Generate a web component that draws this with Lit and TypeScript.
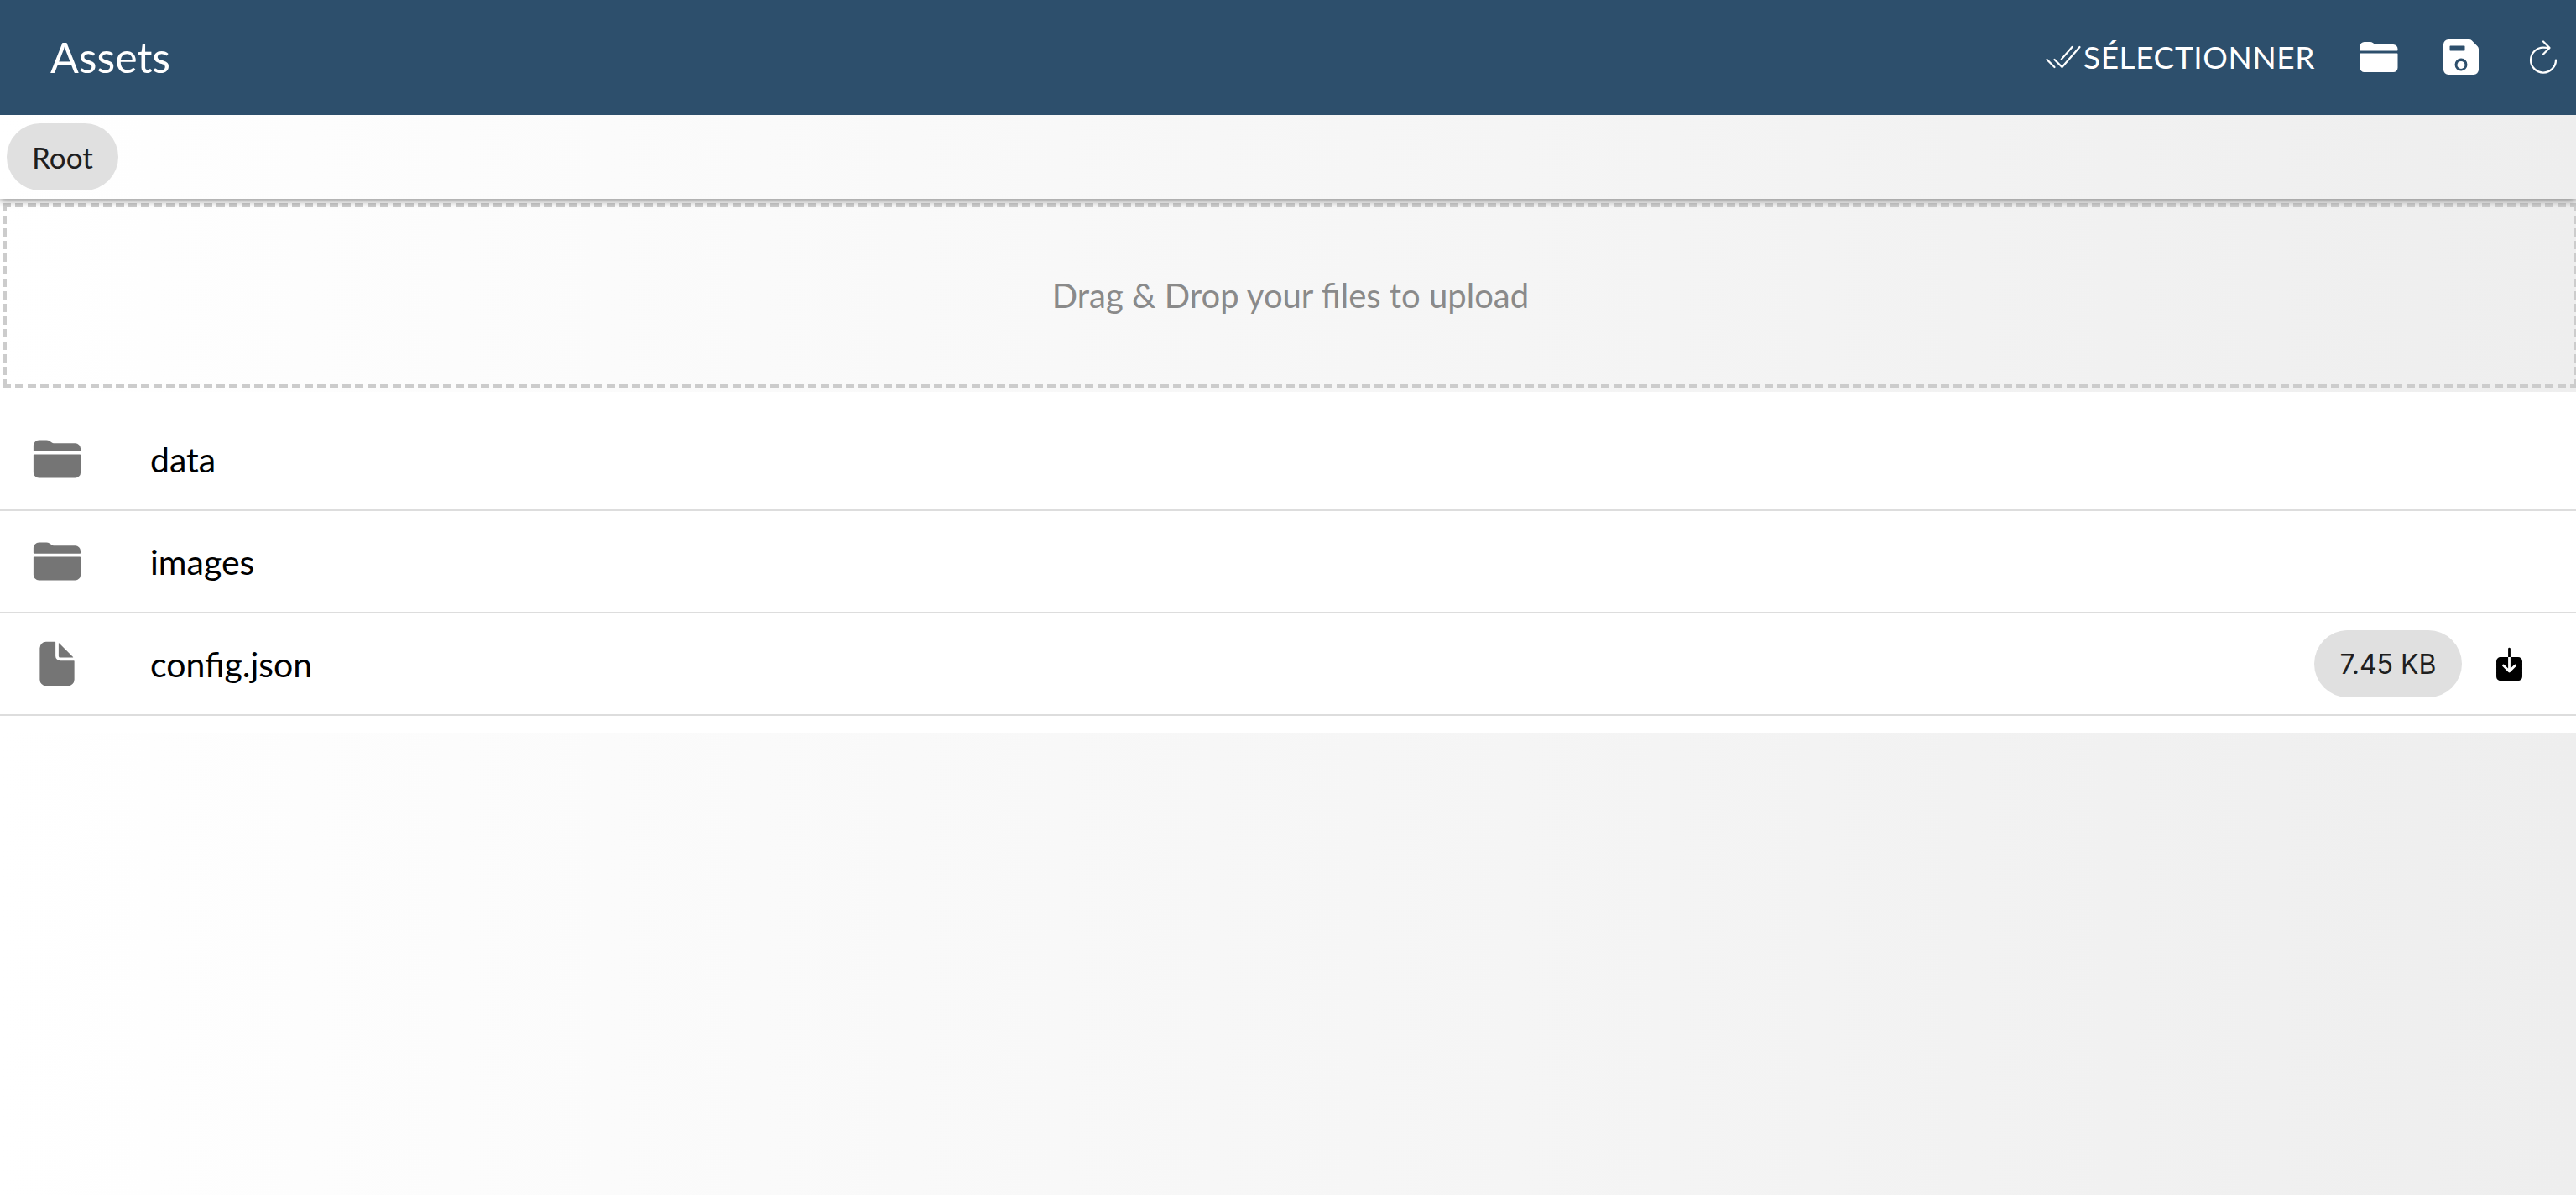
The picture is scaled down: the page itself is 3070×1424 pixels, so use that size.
import { LitElement, html, css, svg } from "lit";
import { customElement } from "lit/decorators.js";

const folder = svg`<path d="M496 152a56 56 0 00-56-56H220.11a23.89 23.89 0 01-13.31-4L179 73.41A55.77 55.77 0 00147.89 64H72a56 56 0 00-56 56v48a8 8 0 008 8h464a8 8 0 008-8zM16 392a56 56 0 0056 56h368a56 56 0 0056-56V216a8 8 0 00-8-8H24a8 8 0 00-8 8z"/>`;
const documentIcon = svg`<path d="M428 224H288a48 48 0 01-48-48V36a4 4 0 00-4-4h-92a64 64 0 00-64 64v320a64 64 0 0064 64h224a64 64 0 0064-64V228a4 4 0 00-4-4z"/><path d="M419.22 188.59L275.41 44.78a2 2 0 00-3.41 1.41V176a16 16 0 0016 16h129.81a2 2 0 001.41-3.41z"/>`;
const save = svg`<path d="M465.94 119.76l-73.7-73.7A47.68 47.68 0 00358.3 32H96a64 64 0 00-64 64v320a64 64 0 0064 64h320a64 64 0 0064-64V153.7a47.68 47.68 0 00-14.06-33.94zM120 112h176a8 8 0 018 8v48a8 8 0 01-8 8H120a8 8 0 01-8-8v-48a8 8 0 018-8zm139.75 319.91a80 80 0 1176.16-76.16 80.06 80.06 0 01-76.16 76.16z"/><circle cx="256" cy="356" r="48"/>`;
const refresh = svg`<path d="M320 146s24.36-12-64-12a160 160 0 10160 160" fill="none" stroke="currentColor" stroke-linecap="round" stroke-miterlimit="10" stroke-width="24"/><path fill="none" stroke="currentColor" stroke-linecap="round" stroke-linejoin="round" stroke-width="24" d="M256 58l80 80-80 80"/>`;
const done = svg`<path fill="none" stroke="currentColor" stroke-linecap="round" stroke-linejoin="round" stroke-width="24" d="M464 128L240 384l-96-96M144 384l-96-96M368 128L232 284"/>`;
const download = svg`<path d="M376 160H272v153.37l52.69-52.68a16 16 0 0122.62 22.62l-80 80a16 16 0 01-22.62 0l-80-80a16 16 0 0122.62-22.62L240 313.37V160H136a56.06 56.06 0 00-56 56v208a56.06 56.06 0 0056 56h240a56.06 56.06 0 0056-56V216a56.06 56.06 0 00-56-56zM272 48a16 16 0 00-32 0v112h32z"/>`;

const icon = (body: unknown, cls: string) =>
  html`<svg class=${cls} viewBox="0 0 512 512" fill="currentColor">${body}</svg>`;

interface Entry { name: string; kind: "folder" | "file"; size?: string }
const entries: Entry[] = [
  { name: "data", kind: "folder" },
  { name: "images", kind: "folder" },
  { name: "config.json", kind: "file", size: "7.45 KB" },
];

@customElement("app-root")
export class AppRoot extends LitElement {
  static styles = css`
    :host {
      display: block;
      width: 100%;
      height: 1424px;
      overflow: hidden;
      font-family: "Lato", "Liberation Sans", sans-serif;
      background: linear-gradient(90deg, #fff 0%, #eee 100%);
    }
    .header {
      height: 137px;
      background: #2d4f6c;
      color: #fff;
      display: flex;
      align-items: center;
      padding: 0 15px 2px 60px;
      box-sizing: border-box;
    }
    .title { font-size: 50px; font-weight: 400; flex: 1; }
    .select {
      display: flex;
      align-items: center;
      font-size: 37px;
      letter-spacing: 0.6px;
      margin-right: 52px;
    }
    .hicons { display: flex; gap: 50px; align-items: center; }
    .hi { width: 48px; height: 48px; display: block; }
    .crumbs {
      position: relative;
      z-index: 1;
      height: 100px;
      display: flex;
      align-items: center;
      box-shadow: 0 2px 8px rgba(0, 0, 0, 0.45);
      clip-path: inset(0 0 -30px 0);
    }
    .chip {
      display: inline-flex;
      align-items: center;
      height: 80px;
      border-radius: 40px;
      background: #e0e0e0;
      color: #1f1f1f;
      font-size: 35px;
      box-sizing: border-box;
      padding: 0 30px;
    }
    .crumbs .chip { margin-left: 8px; }
    .zone-wrap { padding: 5px 0 5px 3px; width: 3070px; box-sizing: border-box; }
    .zone {
      width: 3070px;
      height: 220px;
      box-sizing: border-box;
      border: 5px dashed #ccc;
      display: flex;
      align-items: center;
      justify-content: center;
      color: #8a8a8a;
      font-size: 40px;
    }
    .list { background: #fff; padding: 20px 0 20px; }
    .row {
      height: 122px;
      box-sizing: border-box;
      border-bottom: 2px solid #ddd;
      display: flex;
      align-items: center;
      color: #000;
      font-size: 41px;
    }
    .lead { width: 60px; height: 60px; margin: 0 81px 0 38px; color: #757575; display: block; flex: none; }
    .name { flex: 1; }
    .row .chip {
      margin-right: 34px;
      font-family: "Inter", "Liberation Sans", sans-serif;
      font-size: 32px;
      width: 176px;
      padding: 0;
      justify-content: center;
    }
    .dl { width: 45px; height: 45px; margin-right: 57px; display: block; flex: none; }
  `;

  render() {
    return html`
      <div class="header">
        <div class="title">Assets</div>
        <div class="select">${icon(done, "hi")}<span>SÉLECTIONNER</span></div>
        <div class="hicons">
          ${icon(folder, "hi")}${icon(save, "hi")}${icon(refresh, "hi")}
        </div>
      </div>
      <div class="crumbs"><span class="chip">Root</span></div>
      <div class="zone-wrap"><div class="zone">Drag &amp; Drop your files to upload</div></div>
      <div class="list">
        ${entries.map(
          (e) => html`<div class="row">
            ${icon(e.kind === "folder" ? folder : documentIcon, "lead")}
            <span class="name">${e.name}</span>
            ${e.size
              ? html`<span class="chip">${e.size}</span>${icon(download, "dl")}`
              : null}
          </div>`
        )}
      </div>
    `;
  }
}
